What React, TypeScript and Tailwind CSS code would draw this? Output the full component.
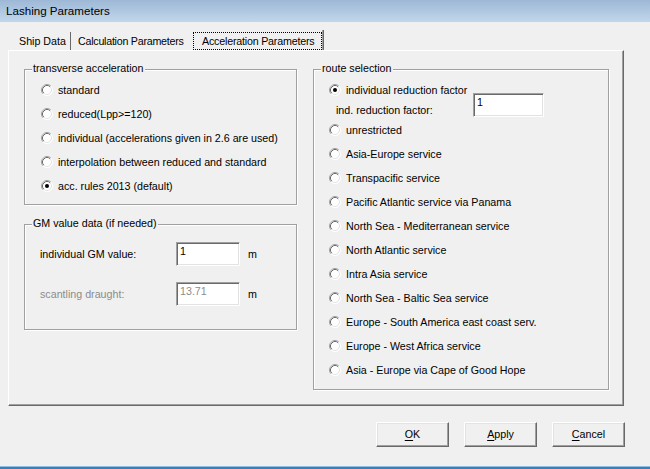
import React from "react";

const font = { fontFamily: '"Liberation Sans", Arial, sans-serif' };

function Radio({ checked = false }: { checked?: boolean }) {
  return (
    <svg width="12" height="12" viewBox="0 0 12 12" className="shrink-0">
      <circle cx="6" cy="6" r="5.5" fill="#ffffff" />
      <path d="M2.11 9.89 A5.5 5.5 0 0 1 9.89 2.11" fill="none" stroke="#a0a0a0" strokeWidth="1" />
      <path d="M2.82 9.18 A4.5 4.5 0 0 1 9.18 2.82" fill="none" stroke="#696969" strokeWidth="1" />
      <path d="M9.89 2.11 A5.5 5.5 0 0 1 2.11 9.89" fill="none" stroke="#ffffff" strokeWidth="1" />
      <path d="M9.18 2.82 A4.5 4.5 0 0 1 2.82 9.18" fill="none" stroke="#e3e3e3" strokeWidth="1" />
      {checked && <circle cx="6" cy="6" r="2" fill="#000000" />}
    </svg>
  );
}

function RadioRow({ label, checked = false }: { label: string; checked?: boolean }) {
  return (
    <div className="flex h-[24px] items-center gap-[5px]">
      <Radio checked={checked} />
      <span className="leading-[13px] text-black">{label}</span>
    </div>
  );
}

function Group({
  label,
  className,
  children,
}: {
  label: string;
  className: string;
  children: React.ReactNode;
}) {
  return (
    <div
      className={
        "relative border border-[#a0a0a0] shadow-[1px_1px_0_#ffffff,inset_1px_1px_0_#ffffff] " + className
      }
    >
      <span className="absolute left-[7px] top-[-8px] bg-[#f0f0f0] px-[1px] leading-[13px] text-black">
        {label}
      </span>
      {children}
    </div>
  );
}

function Edit({
  value,
  disabled = false,
  className,
}: {
  value: string;
  disabled?: boolean;
  className: string;
}) {
  return (
    <div
      className={
        "box-border h-[24px] shrink-0 border border-t-[#a0a0a0] border-l-[#a0a0a0] border-r-white border-b-white bg-white pl-[3px] pt-[1px] leading-[14px] shadow-[inset_1px_1px_0_#696969,inset_-1px_-1px_0_#e3e3e3] " +
        (disabled ? "text-[#8c8c8c] " : "text-black ") +
        className
      }
    >
      {value}
    </div>
  );
}

function Button({ mn, rest }: { mn: string; rest: string }) {
  return (
    <div className="box-border flex h-[25px] w-[73px] items-center justify-center border border-t-white border-l-white border-r-[#696969] border-b-[#696969] bg-[#f0f0f0] text-black shadow-[inset_-1px_-1px_0_#a0a0a0,inset_1px_1px_0_#e3e3e3]">
      <span className="leading-[13px]">
        <span className="underline underline-offset-[2px]">{mn}</span>
        {rest}
      </span>
    </div>
  );
}

const routes = [
  "unrestricted",
  "Asia-Europe service",
  "Transpacific service",
  "Pacific Atlantic service via Panama",
  "North Sea - Mediterranean service",
  "North Atlantic service",
  "Intra Asia service",
  "North Sea - Baltic Sea service",
  "Europe - South America east coast serv.",
  "Europe - West Africa service",
  "Asia - Europe via Cape of Good Hope",
];

export default function App() {
  return (
    <div
      className="flex h-[469px] w-[650px] flex-col overflow-hidden bg-[#f0f0f0] text-[10.7px] text-black"
      style={font}
    >
      {/* Title bar */}
      <div className="flex h-[22px] shrink-0 items-center bg-gradient-to-b from-[#9db8d6] to-[#c2d7ec] pl-[6px]">
        <span className="text-[11.6px] leading-[14px] text-black">Lashing Parameters</span>
      </div>

      {/* Tabs */}
      <div className="mt-[8px] flex h-[20px] shrink-0 items-end pl-[12px]">
        <div className="flex h-[18px] w-[59px] items-center border-r border-r-[#696969] pl-[7px] pt-[1px]">
          <span className="leading-[13px]">Ship Data</span>
        </div>
        <div className="flex h-[18px] w-[119px] items-center pl-[7px] pt-[1px]">
          <span className="leading-[13px] tracking-[-0.25px]">Calculation Parameters</span>
        </div>
        <div className="flex h-[20px] w-[134px] items-end border-r border-r-[#696969] pl-[3px] shadow-[inset_-1px_0_0_#a0a0a0]">
          <div className="flex h-[18px] w-[129px] items-center border border-dotted border-black pl-[8px]">
            <span className="leading-[13px] tracking-[-0.2px]">Acceleration Parameters</span>
          </div>
        </div>
      </div>

      {/* Tab panel */}
      <div className="ml-[8px] box-border flex h-[356px] w-[616px] shrink-0 gap-[16px] border border-t-white border-l-white border-r-[#696969] border-b-[#696969] pl-[15px] pt-[18px] shadow-[inset_-1px_-1px_0_#a0a0a0]">
        {/* Left column */}
        <div className="flex w-[273px] flex-col">
          <Group label="transverse acceleration" className="box-border h-[136px] w-[273px] pl-[16px] pt-[8px]">
            <RadioRow label="standard" />
            <RadioRow label="reduced(Lpp>=120)" />
            <RadioRow label="individual (accelerations given in 2.6 are used)" />
            <RadioRow label="interpolation between reduced and standard" />
            <RadioRow label="acc. rules 2013 (default)" checked />
          </Group>

          <Group label="GM value data (if needed)" className="mt-[19px] box-border h-[106px] w-[273px] pl-[15px] pt-[17px]">
            <div className="flex h-[24px] items-center">
              <span className="w-[136px] leading-[13px]">individual GM value:</span>
              <Edit value="1" className="w-[64px]" />
              <span className="ml-[8px] leading-[13px]">m</span>
            </div>
            <div className="mt-[16px] flex h-[24px] items-center">
              <span className="w-[136px] leading-[13px] text-[#8c8c8c]">scantling draught:</span>
              <Edit value="13.71" disabled className="w-[64px]" />
              <span className="ml-[8px] leading-[13px]">m</span>
            </div>
          </Group>
        </div>

        {/* Right column */}
        <Group label="route selection" className="box-border h-[321px] w-[296px] pl-[15px] pt-[8px]">
          <RadioRow label="individual reduction factor" checked />
          <div className="ml-[7px] flex h-[16px] items-center">
            <span className="w-[137px] leading-[13px]">ind. reduction factor:</span>
            <Edit value="1" className="mb-[10px] w-[71px]" />
          </div>
          {routes.map((r) => (
            <RadioRow key={r} label={r} />
          ))}
        </Group>
      </div>

      {/* Buttons */}
      <div className="mt-[16px] flex w-[625px] shrink-0 justify-end gap-[15px]">
        <Button mn="O" rest="K" />
        <Button mn="A" rest="pply" />
        <Button mn="C" rest="ancel" />
      </div>

      <div className="flex-1" />
      <div className="h-[1px] shrink-0 bg-[#8fc0e4]" />
      <div className="h-[2px] shrink-0 bg-[#3a7fb8]" />
    </div>
  );
}
